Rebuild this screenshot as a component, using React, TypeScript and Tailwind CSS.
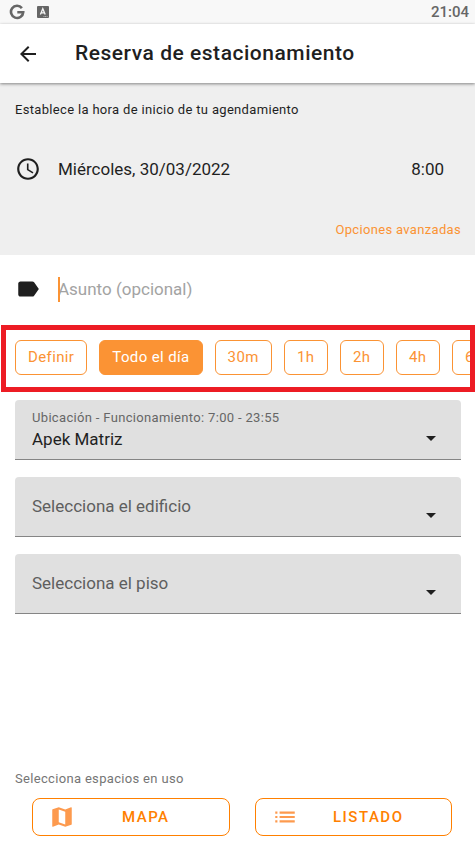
import { useState } from "react";
import {
  MdAccessTime,
  MdArrowBack,
  MdArrowDropDown,
  MdLabel,
  MdList,
  MdMap,
} from "react-icons/md";

const DURATIONS = ["Definir", "Todo el día", "30m", "1h", "2h", "4h", "6h"];

// ─── StatusBar ────────────────────────────────────────────────────────────────
function StatusBar() {
  return (
    <div className="flex h-6 items-center justify-between bg-[#f8f8f8] pl-[9px] pr-1.5 text-[#666]">
      <div className="flex items-center gap-3">
        <svg width="16" height="16" viewBox="0 0 16 16" fill="none" stroke="currentColor" strokeWidth="2.6" aria-hidden="true">
          <path d="M12.9 4.1A6.1 6.1 0 1 0 14.2 8.3H8.3" />
        </svg>
        <svg width="12" height="12" viewBox="0 0 12 12" aria-hidden="true">
          <rect width="12" height="12" rx="1" fill="#666" />
          <path d="M3.4 8.6 5.8 2.8 8.2 8.6M4.4 6.8h2.8" fill="none" stroke="#f8f8f8" strokeWidth="1.3" />
          <path d="M6.5 10.5h4" stroke="#bbb" strokeWidth="1" strokeDasharray="1 .6" />
        </svg>
      </div>
      <span className="text-[15px] font-medium">21:04</span>
    </div>
  );
}

// ─── SelectField ──────────────────────────────────────────────────────────────
// The label floats to the top once the field has a value.
function SelectField({
  id,
  label,
  options,
  initial = "",
}: {
  id: string;
  label: string;
  options: string[];
  initial?: string;
}) {
  const [value, setValue] = useState(initial);

  return (
    <div className="relative rounded-t border-b border-[#858585] bg-[#e0e0e0]">
      <label
        htmlFor={id}
        className={
          value
            ? "pointer-events-none absolute left-[17px] top-2 text-[13px] leading-5 tracking-wide text-[#666]"
            : "pointer-events-none absolute left-[17px] top-[19px] text-[17px] leading-5 text-[#5e5e5e]"
        }
      >
        {label}
      </label>
      <select
        id={id}
        value={value}
        onChange={(e) => setValue(e.target.value)}
        className="block h-[59px] w-full appearance-none bg-transparent pl-[17px] pr-12 pt-5 text-[17px] text-[#1f1f1f] outline-none"
      >
        <option value="" />
        {options.map((o) => (
          <option key={o} value={o}>{o}</option>
        ))}
      </select>
      <MdArrowDropDown size={24} className="pointer-events-none absolute right-[18px] top-[26px] text-[#1f1f1f]" />
    </div>
  );
}

// ─── Page ─────────────────────────────────────────────────────────────────────
export default function App() {
  const [duration, setDuration] = useState("Todo el día");
  const [subject, setSubject] = useState("");

  return (
    <main className="flex min-h-screen flex-col bg-white font-[Roboto,sans-serif] text-[#1f1f1f]">
      <StatusBar />

      <header className="relative flex h-[59px] items-center gap-[35px] bg-white pl-4 pt-px shadow-[0_1px_3px_rgba(0,0,0,0.45)]">
        <button type="button" aria-label="Volver">
          <MdArrowBack size={24} />
        </button>
        <h1 className="text-[21px] font-medium tracking-wide">Reserva de estacionamiento</h1>
      </header>

      <section className="flex h-[172px] flex-col bg-[#efefef] pb-[15px] pl-[15px] pr-3.5 pt-[17px]">
        <p className="text-[13px] leading-5 tracking-wide">Establece la hora de inicio de tu agendamiento</p>
        <div className="mt-9 flex items-center text-[17px] leading-6">
          <MdAccessTime size={26} />
          <button type="button" className="ml-[17px]">Miércoles, 30/03/2022</button>
          <button type="button" className="ml-auto mr-[17px]">8:00</button>
        </div>
        <a href="#avanzadas" className="mt-auto self-end text-[13px] leading-5 tracking-wide text-[#fb9334]">
          Opciones avanzadas
        </a>
      </section>

      <div className="flex h-[70px] items-center gap-[17px] px-[15px] pb-0.5">
        <label htmlFor="asunto" aria-label="Asunto">
          <MdLabel size={26} />
        </label>
        <div className="relative flex-1">
          <input
            id="asunto"
            value={subject}
            onChange={(e) => setSubject(e.target.value)}
            placeholder="Asunto (opcional)"
            className="w-full text-[17px] leading-6 caret-[#fb9334] outline-none placeholder:text-[#a3a3a3]"
          />
          {/* Resting cursor while the field is empty */}
          {!subject && <span className="absolute inset-y-0 left-0 w-0.5 bg-[#fb9334]" />}
        </div>
      </div>

      {/* Highlighted duration picker */}
      <div className="ml-px flex gap-3 overflow-hidden border-[5px] border-[#ed1c24] pb-3 pl-[9px] pt-2.5">
        {DURATIONS.map((d) => (
          <button
            key={d}
            type="button"
            aria-pressed={d === duration}
            onClick={() => setDuration(d)}
            className={[
              "h-[35px] min-w-11 shrink-0 rounded-md border border-[#fb9334] px-3 text-[15px] tracking-wide",
              d === duration ? "bg-[#fb9334] text-white" : "text-[#fb9334]",
            ].join(" ")}
          >
            {d}
          </button>
        ))}
      </div>

      <section className="flex flex-col gap-[17px] pl-[15px] pr-3.5 pt-2">
        <SelectField
          id="ubicacion"
          label="Ubicación - Funcionamiento: 7:00 - 23:55"
          options={["Apek Matriz"]}
          initial="Apek Matriz"
        />
        <SelectField id="edificio" label="Selecciona el edificio" options={["Edificio A", "Edificio B"]} />
        <SelectField id="piso" label="Selecciona el piso" options={["Piso 1", "Piso 2"]} />
      </section>

      <footer className="mt-auto px-[15px] pb-[13px] pt-8">
        <p className="text-[13px] leading-5 tracking-wide text-[#757575]">Selecciona espacios en uso</p>
        <div className="mt-[9px] flex gap-[25px] pl-[17px] pr-2">
          <button
            type="button"
            className="flex h-[38px] flex-1 items-center rounded-lg border border-[#ff8000] pl-4 pr-3 text-[15px] font-medium tracking-widest text-[#ff8000]"
          >
            <MdMap size={26} className="text-[#fd9a4e]" />
            <span className="flex-1">MAPA</span>
          </button>
          <button
            type="button"
            className="flex h-[38px] flex-1 items-center rounded-lg border border-[#ff8000] pl-4 pr-3 text-[15px] font-medium tracking-widest text-[#ff8000]"
          >
            <MdList size={26} className="text-[#fd9a4e]" />
            <span className="flex-1">LISTADO</span>
          </button>
        </div>
      </footer>
    </main>
  );
}
